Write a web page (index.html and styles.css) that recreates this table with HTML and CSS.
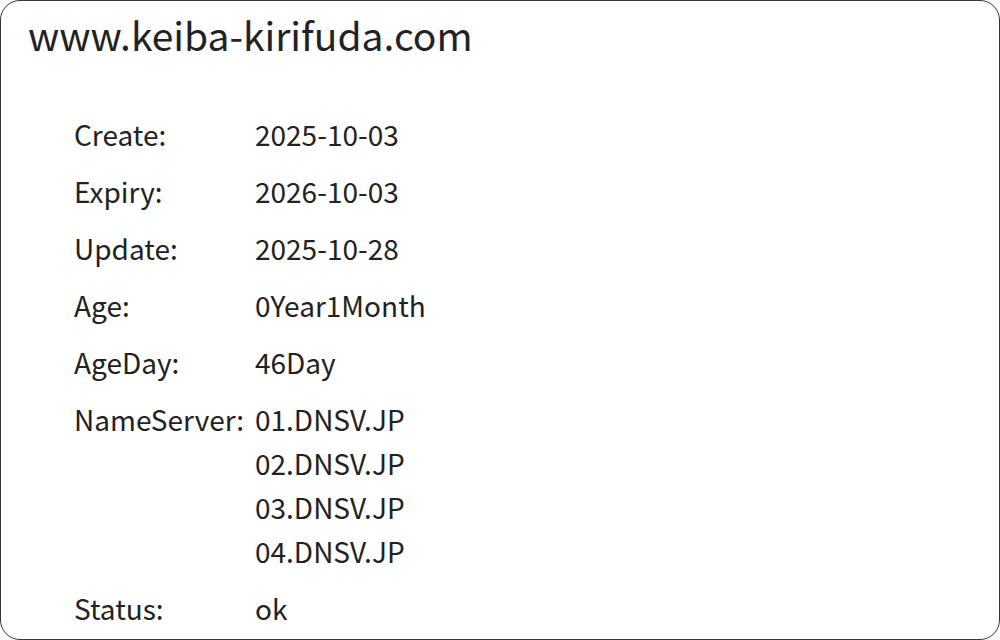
FILE: index.html
```html
<!DOCTYPE html>
<html>
<head>
<meta charset="utf-8">
<link rel="stylesheet" href="styles.css">
</head>
<body>
<div class="card">
  <h1 class="title">www.keiba-kirifuda.com</h1>
  <table class="info">
    <tr><td class="label">Create:</td><td class="value">2025-10-03</td></tr>
    <tr><td class="label">Expiry:</td><td class="value">2026-10-03</td></tr>
    <tr><td class="label">Update:</td><td class="value">2025-10-28</td></tr>
    <tr><td class="label">Age:</td><td class="value">0Year1Month</td></tr>
    <tr><td class="label">AgeDay:</td><td class="value">46Day</td></tr>
    <tr><td class="label">NameServer:</td><td class="value"><div>01.DNSV.JP</div><div>02.DNSV.JP</div><div>03.DNSV.JP</div><div>04.DNSV.JP</div></td></tr>
    <tr><td class="label">Status:</td><td class="value">ok</td></tr>
  </table>
</div>
</body>
</html>
```
FILE: styles.css
```css
html, body {
  margin: 0;
  padding: 0;
  background: #ffffff;
}
body {
  font-family: "Noto Sans CJK JP", "Noto Sans", sans-serif;
  color: #222222;
}
.card {
  box-sizing: border-box;
  width: 1000px;
  height: 640px;
  border: 1px solid #333333;
  border-radius: 20px;
  padding: 7px 27px;
  overflow: hidden;
}
.title {
  margin: 0;
  font-size: 39px;
  font-weight: 400;
  line-height: 52px;
}
.info {
  border-collapse: collapse;
  margin-left: 46px;
  margin-top: 52px;
  font-size: 28px;
}
.info td {
  padding: 0;
  vertical-align: top;
  line-height: 44px;
}
.info tr + tr td {
  padding-top: 13px;
}
.label {
  width: 181px;
}
```
